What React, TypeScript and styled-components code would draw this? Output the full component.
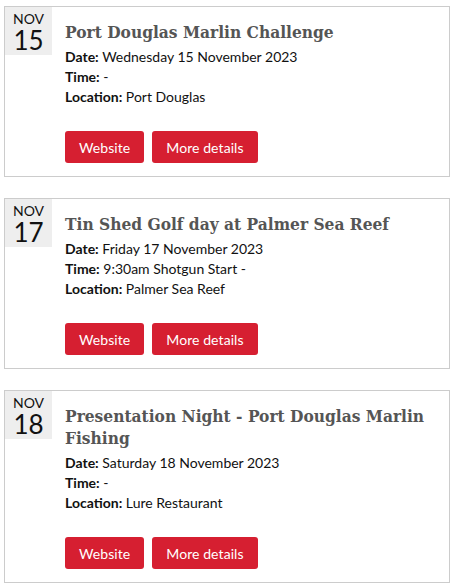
import React from "react";
import styled, { createGlobalStyle } from "styled-components";

const Global = createGlobalStyle`
  html, body { margin: 0; padding: 0; background: #fff; }
  body { font-family: Lato, "Liberation Sans", sans-serif; color: #111; }
`;

const List = styled.div`
  display: flex;
  flex-direction: column;
  gap: 21px;
  padding: 6px 4px 0 4px;
`;

const Card = styled.article`
  display: flex;
  border: 1px solid #cccccc;
  padding-bottom: 13px;
`;

const DateBox = styled.div`
  flex: 0 0 47px;
  height: 48px;
  background: #eeeeee;
  display: flex;
  flex-direction: column;
  align-items: center;
  align-self: flex-start;
  padding-top: 4px;
  box-sizing: border-box;
`;

const Month = styled.span`
  font-size: 14px;
  line-height: 16px;
  color: #111;
`;

const Day = styled.span`
  font-size: 26px;
  line-height: 26px;
  color: #111;
`;

const Body = styled.div`
  flex: 1;
  padding: 14px 12px 0 13px;
`;

const Title = styled.h2`
  margin: 0 0 4px 0;
  font-family: "DejaVu Serif Condensed", "DejaVu Serif", serif;
  font-weight: bold;
  font-size: 17.2px;
  line-height: 22px;
  color: #555555;
`;

const Line = styled.div`
  font-size: 14px;
  line-height: 20px;
  color: #111;
`;

const Label = styled.strong`
  font-weight: bold;
`;

const Actions = styled.div`
  display: flex;
  gap: 8px;
  margin-top: 24px;
`;

const Button = styled.a`
  display: inline-flex;
  align-items: center;
  justify-content: center;
  height: 32px;
  padding: 0 14px;
  background: #d61f31;
  color: #fff;
  border-radius: 3px;
  font-size: 14px;
  letter-spacing: 0.08px;
  text-decoration: none;
  box-sizing: border-box;
`;

type Ev = {
  day: string;
  title: string;
  date: string;
  time: string;
  location: string;
};

const events: Ev[] = [
  {
    day: "15",
    title: "Port Douglas Marlin Challenge",
    date: "Wednesday 15 November 2023",
    time: "-",
    location: "Port Douglas",
  },
  {
    day: "17",
    title: "Tin Shed Golf day at Palmer Sea Reef",
    date: "Friday 17 November 2023",
    time: "9:30am Shotgun Start -",
    location: "Palmer Sea Reef",
  },
  {
    day: "18",
    title: "Presentation Night - Port Douglas Marlin Fishing",
    date: "Saturday 18 November 2023",
    time: "-",
    location: "Lure Restaurant",
  },
];

export default function App() {
  return (
    <>
      <Global />
      <List>
        {events.map((e) => (
          <Card key={e.day}>
            <DateBox>
              <Month>NOV</Month>
              <Day>{e.day}</Day>
            </DateBox>
            <Body>
              <Title>{e.title}</Title>
              <Line>
                <Label>Date:</Label> {e.date}
              </Line>
              <Line>
                <Label>Time:</Label> {e.time}
              </Line>
              <Line>
                <Label>Location:</Label> {e.location}
              </Line>
              <Actions>
                <Button href="#">Website</Button>
                <Button href="#">More details</Button>
              </Actions>
            </Body>
          </Card>
        ))}
      </List>
    </>
  );
}
